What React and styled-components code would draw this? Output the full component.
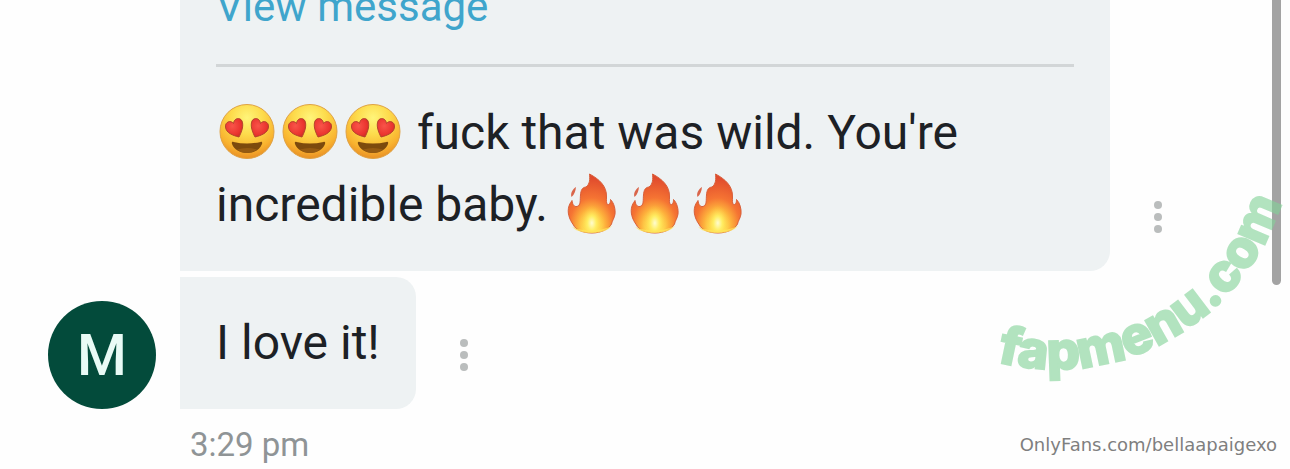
import styled, { createGlobalStyle } from 'styled-components';

const GlobalStyle = createGlobalStyle`
  * {
    box-sizing: border-box;
  }

  body {
    margin: 0;
    background-color: #fefefe;
    font-family: Roboto, 'Liberation Sans', sans-serif;
    color: #1d2125;
  }
`;

const Page = styled.main`
  position: relative;
  display: flex;
  flex-direction: column;
  justify-content: flex-end;
  height: 100vh;
  overflow: hidden;
`;

const Thread = styled.section`
  display: flex;
  align-items: flex-end;
  gap: 24px;
  padding: 0 120px 0 48px;
`;

const Avatar = styled.div`
  display: flex;
  flex: none;
  align-items: center;
  justify-content: center;
  width: 108px;
  height: 108px;
  border-radius: 50%;
  background-color: #034b3b;
  color: #e9fbf6;
  font-size: 57px;
  font-weight: 500;
`;

const Messages = styled.div`
  display: flex;
  flex: 1;
  flex-direction: column;
  gap: 6px;
  min-width: 0;
`;

const MessageRow = styled.div`
  display: flex;
  align-items: flex-end;
  gap: 36px;
`;

const Bubble = styled.div`
  flex: ${({ $wide }) => ($wide ? '1' : 'none')};
  min-width: 0;
  padding: 30px 36px;
  border-radius: ${({ $wide }) => ($wide ? '0 0 20px 0' : '0 20px 20px 0')};
  background-color: #eef2f3;
`;

const Text = styled.p`
  margin: 0;
  font-size: 48px;
  line-height: 72px;
`;

const MessageLink = styled.a`
  display: block;
  color: #3fa5cc;
  font-size: 42px;
  line-height: 60px;
  text-decoration: none;
`;

const Divider = styled.hr`
  height: 3px;
  margin: 27px 0 30px;
  border: 0;
  background-color: #d2d6d7;
`;

const MenuButton = styled.button`
  display: flex;
  flex: none;
  align-items: center;
  justify-content: center;
  width: 24px;
  height: 108px;
  padding: 0;
  border: 0;
  background: none;
  cursor: pointer;
`;

const Time = styled.time`
  padding: 12px 190px 0;
  color: #8f9496;
  font-size: 33px;
  line-height: 48px;
`;

const Emoji = styled.svg`
  width: 63px;
  height: 64px;
  vertical-align: -16px;
`;

const ScrollThumb = styled.div`
  position: absolute;
  top: 0;
  right: 9px;
  width: 9px;
  height: 285px;
  border-radius: 0 0 5px 5px;
  background-color: #a3a3a3;
`;

const Stamp = styled.svg`
  position: absolute;
  right: 0;
  bottom: 69px;
  width: 310px;
  height: 220px;
  overflow: visible;
  pointer-events: none;
`;

const Credit = styled.span`
  position: absolute;
  right: 13px;
  bottom: 12px;
  color: #7f7f7f;
  font-family: 'DejaVu Sans', sans-serif;
  font-size: 18px;
  line-height: 24px;
`;

function EmojiDefs() {
  return (
    <svg width="0" height="0" style={{ position: 'absolute' }} aria-hidden="true">
      <defs>
        <radialGradient id="face" cx="0.5" cy="0.25" r="0.75">
          <stop offset="0" stopColor="#fff57a" />
          <stop offset="0.4" stopColor="#fddb4c" />
          <stop offset="0.78" stopColor="#f9b32f" />
          <stop offset="1" stopColor="#e88f25" />
        </radialGradient>
        <radialGradient id="heart" cx="0.4" cy="0.4" r="0.7">
          <stop offset="0" stopColor="#f95449" />
          <stop offset="0.7" stopColor="#ea342f" />
          <stop offset="1" stopColor="#c92c22" />
        </radialGradient>
        <radialGradient id="flame" cx="0.5" cy="0.88" r="0.82">
          <stop offset="0" stopColor="#fffbc0" />
          <stop offset="0.16" stopColor="#ffec58" />
          <stop offset="0.36" stopColor="#fdb03c" />
          <stop offset="0.58" stopColor="#f57433" />
          <stop offset="1" stopColor="#e04a2d" />
        </radialGradient>
        <radialGradient id="core" cx="0.5" cy="0.75" r="0.5">
          <stop offset="0" stopColor="#fffcd0" />
          <stop offset="0.4" stopColor="#ffee62" stopOpacity="0.9" />
          <stop offset="1" stopColor="#ffb43a" stopOpacity="0" />
        </radialGradient>
      </defs>
    </svg>
  );
}

function HeartEyes() {
  return (
    <Emoji viewBox="-1 1 63 64" role="img" aria-label="heart eyes">
      <circle cx="30" cy="31.5" r="27" fill="url(#face)" stroke="#dfa244" strokeWidth="1" />
      <path
        d="M22 37 C16 35.500 9 33 8.500 27 C8 21.500 14 20 16.500 23.500 C17 18 23 17 25 21 C27 26 24.500 32 22 37Z"
        fill="url(#heart)"
        stroke="#b3442c"
        strokeWidth="1"
      />
      <path
        d="M38 37 C44 35.500 51 33 51.500 27 C52 21.500 46 20 43.500 23.500 C43 18 37 17 35 21 C33 26 35.500 32 38 37Z"
        fill="url(#heart)"
        stroke="#b3442c"
        strokeWidth="1"
      />
      <path
        d="M16.500 42 Q30 45 43.500 42 C45 41.500 45.500 42.500 45 44 C43 49.500 37 53 30 53 C23 53 17 49.500 15 44 C14.500 42.500 15 41.500 16.500 42Z"
        fill="#7c4a0d"
      />
      <path d="M20 49.500 Q30 46.500 40 49.500 Q36 53 30 53 Q24 53 20 49.500Z" fill="#945a12" />
    </Emoji>
  );
}

function Fire() {
  return (
    <Emoji viewBox="-4 4 63 64" role="img" aria-label="fire">
      <path
        d="M25.500 5 C35 10 43 17 42.500 28 C42.500 31 42 34 43.500 35.500 C46 36 46.500 33 46.500 30.500 C50 34 51.500 40 51 45 C50.500 49 48 52 47.500 55 C45 60 37 64 28 64 C18 64 11 60 9.500 56 C5 50 3 43 5 37 C6 34 7.500 32.500 8 31.500 C8.500 35.500 10 38 13 37.500 C17 36.500 16 31 16.500 26 C17 21 18 18.500 22 18 C26 15 26 10 25.500 5Z"
        fill="url(#flame)"
        stroke="#d8603a"
        strokeWidth="1"
      />
      <path
        d="M28 27 C31 35 38 38 39 47 C40 57 35 62 28 63 C20 63 15 57 17 49 C19 41 27 37 28 27Z"
        fill="url(#core)"
      />
      <path d="M8 58 Q28 66 48 57 Q42 64 28 64 Q14 64 8 58Z" fill="#ffe45a" opacity="0.8" />
      <path d="M12 18 C9 20 6 24 7.500 28 C10.500 25.500 11.500 22 12 18Z" fill="#d9654a" />
    </Emoji>
  );
}

function MessageMenu() {
  return (
    <MenuButton type="button" aria-label="Message options">
      <svg width="8" height="32" viewBox="0 0 8 32" fill="#babdbd">
        <circle cx="4" cy="4" r="4" />
        <circle cx="4" cy="16" r="4" />
        <circle cx="4" cy="28" r="4" />
      </svg>
    </MenuButton>
  );
}

function SiteStamp() {
  return (
    <Stamp viewBox="0 0 310 220">
      <path id="stamp-arc" d="M17 182 A237 237 0 0 0 312 -48" fill="none" />
      <g opacity="0.61">
        <text
          fill="#83d398"
          stroke="#83d398"
          strokeWidth="2"
          fontFamily="Inter, 'Liberation Sans', sans-serif"
          fontSize="52"
          fontWeight="800"
        >
          <textPath href="#stamp-arc">fapmenu.com</textPath>
        </text>
      </g>
    </Stamp>
  );
}

function App() {
  return (
    <>
      <GlobalStyle />
      <EmojiDefs />
      <Page>
        <Thread>
          <Avatar>M</Avatar>
          <Messages>
            <MessageRow>
              <Bubble $wide>
                <MessageLink href="#message">View message</MessageLink>
                <Divider />
                <Text>
                  <HeartEyes />
                  <HeartEyes />
                  <HeartEyes /> fuck that was wild. You're incredible baby. <Fire />
                  <Fire />
                  <Fire />
                </Text>
              </Bubble>
              <MessageMenu />
            </MessageRow>
            <MessageRow>
              <Bubble>
                <Text>I love it!</Text>
              </Bubble>
              <MessageMenu />
            </MessageRow>
          </Messages>
        </Thread>
        <Time>3:29 pm</Time>
        <ScrollThumb />
        <SiteStamp />
        <Credit>OnlyFans.com/bellaapaigexo</Credit>
      </Page>
    </>
  );
}

export default App;
